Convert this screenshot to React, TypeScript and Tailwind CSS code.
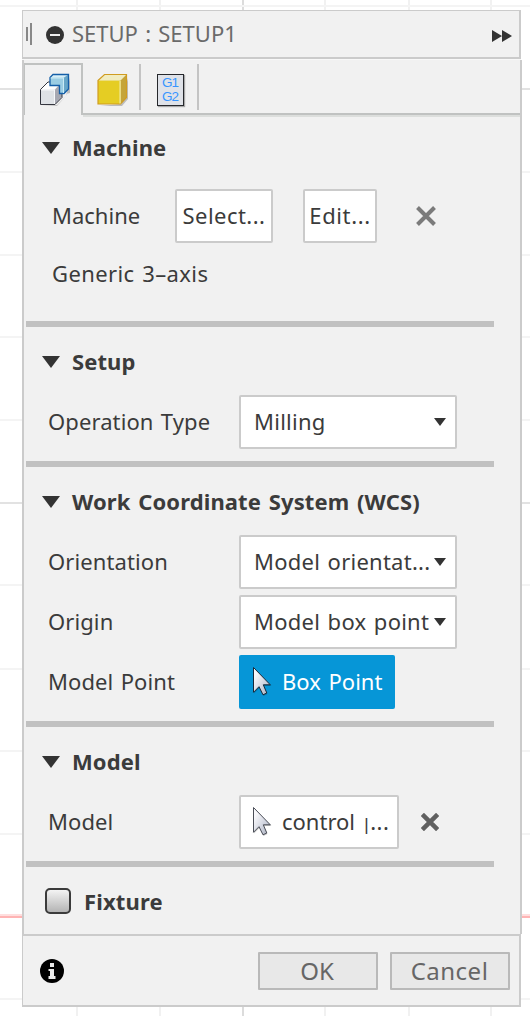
import type { ReactNode } from "react";

const GRID_X = [77, 160, 243, 325, 409, 491];
const GRID_Y = [6, 89, 172, 255, 337, 420, 503, 585, 669, 751, 834, 999];

function CanvasGrid() {
  return (
    <svg className="absolute inset-0" width="530" height="1016" viewBox="0 0 530 1016">
      {GRID_X.map((x) => (
        <rect key={x} x={x - 1} y="0" width="2" height="1016" fill={x === 243 ? "#dcdcdc" : "#f1f1f1"} />
      ))}
      {GRID_Y.map((y) => (
        <rect key={y} x="0" y={y - 1} width="530" height="2" fill={y === 89 || y === 503 ? "#e2e2e2" : "#f4f4f4"} />
      ))}
      <rect x="0" y="914" width="530" height="4" fill="#ffdede" />
      <rect x="0" y="916" width="530" height="2" fill="#ffb4b4" />
    </svg>
  );
}

function Triangle() {
  return (
    <svg className="mt-px" width="18" height="12" viewBox="0 0 18 12">
      <path d="M0 0H18L9 12Z" fill="#333" />
    </svg>
  );
}

function Cross({ color, width, size }: { color: string; width: number; size: number }) {
  return (
    <svg width={size} height={size} viewBox="0 0 20 20">
      <path d="M1.5 1.5L18.5 18.5M18.5 1.5L1.5 18.5" stroke={color} strokeWidth={width} />
    </svg>
  );
}

function Pointer({ dark }: { dark?: boolean }) {
  return (
    <svg width="20" height="32" viewBox="0 0 20 32">
      <defs>
        <linearGradient id="pointerFill" x1="0" y1="0" x2="1" y2="1">
          <stop offset="0.2" stopColor="#f8f8fb" />
          <stop offset="0.65" stopColor="#ccd0dc" />
          <stop offset="1" stopColor="#a4a9b8" />
        </linearGradient>
      </defs>
      <path d="M2 2V27.5L7.5 22L11.5 30L15.5 28L12 20H19.5Z" fill="#000" opacity="0.22" />
      <path
        d="M1.5 1.5V26.3L7 20.7L11 28.8L14.8 27L11.3 18.8H18.3Z"
        fill="url(#pointerFill)"
        stroke={dark ? "#17293a" : "#4b4e58"}
        strokeWidth="1"
      />
    </svg>
  );
}

function SetupIcon() {
  return (
    <svg width="32" height="34" viewBox="0 0 32 34">
      <path d="M3 33H18L27 23V21L31 20V4L27 23L18 32Z" fill="#000" opacity="0.2" />
      <path d="M1.5 16.5L9 9H23L16 16.5Z" fill="#fff" />
      <path d="M16 16.5L23 9V24L16 31.5Z" fill="#a6a8b2" />
      <path d="M1.5 16.5H16V31.5H1.5Z" fill="#dfe2e6" />
      <path d="M1.5 16.5L9 9H23V24.5L16 31.5H1.5Z" fill="none" stroke="#34363f" />
      <path d="M2 17H15.5V31" fill="none" stroke="#f7f8fa" />
      <path d="M11 4.5L14 1.5H29.5L25 4.5Z" fill="#d7eff8" />
      <path d="M25 4.5L29.5 1.5V16L25 20.5Z" fill="#67a6c8" />
      <path d="M11 4.5H25V20.5H20.5V12.5H11Z" fill="#9bcde3" />
      <path d="M29.5 1.5H14L11 4.5V12.5H20.5V20.5H25L29.5 16Z" fill="none" stroke="#155fa8" strokeWidth="1.3" />
      <path d="M11.7 5H24.5V20" fill="none" stroke="#caebf5" />
    </svg>
  );
}

function StockIcon() {
  return (
    <svg width="32" height="34" viewBox="0 0 32 34">
      <path d="M3 33H25L31 26V5L24 31Z" fill="#000" opacity="0.22" />
      <path d="M1 7.5L7.5 1.5H29.5L23.5 7.5Z" fill="#f1ecc0" />
      <path d="M23.5 7.5L29.5 1.5V24.5L23.5 31Z" fill="#c5a439" />
      <path d="M1 7.5H23.5V31H1Z" fill="#e5cd23" />
      <path d="M1 7.5L7.5 1.5H29.5V24.5L23.5 31H1Z" fill="none" stroke="#d09c20" strokeWidth="1.2" />
      <path d="M23 8V30.5" fill="none" stroke="#f1ecae" />
    </svg>
  );
}

function PostIcon() {
  return (
    <div className="flex h-[32px] w-[27px] flex-col items-center justify-center border border-[#26282c] bg-[#dfe2e8] pr-px font-['Liberation_Sans',sans-serif] text-[13.5px] leading-[14px] tracking-[-1px] text-[#3795ff] shadow-[1px_1px_1px_rgba(0,0,0,0.3)]">
      <span>G1</span>
      <span>G2</span>
    </div>
  );
}

function SectionTitle({ children }: { children: ReactNode }) {
  return (
    <div className="flex h-[68px] items-center pl-4">
      <Triangle />
      <h2 className="ml-3 font-bold tracking-[0.1px] [word-spacing:2px]">{children}</h2>
    </div>
  );
}

function Section({ title, children }: { title: string; children: ReactNode }) {
  return (
    <section className="border-b-[6px] border-[#c1c1c1] pb-3">
      <SectionTitle>{title}</SectionTitle>
      <div className="flex flex-col gap-1.5">{children}</div>
    </section>
  );
}

function Field({ label, children }: { label: string; children: ReactNode }) {
  return (
    <div className="flex h-[54px] items-center pl-[22px]">
      <span className="w-[191px] shrink-0 pb-0.5 tracking-[0.1px]">{label}</span>
      {children}
    </div>
  );
}

const boxClass = "flex h-[54px] shrink-0 items-center rounded-[2px] border-2 border-[#cbcbcb] bg-white";

function Select({ value }: { value: string }) {
  return (
    <button className={`${boxClass} w-[218px] justify-between pr-[9px] pl-[13px] whitespace-nowrap`}>
      <span className="pb-0.5 tracking-[0.25px] [word-spacing:1.5px]">{value}</span>
      <svg width="12" height="8" viewBox="0 0 12 8">
        <path d="M0 0H12L6 8Z" fill="#333" />
      </svg>
    </button>
  );
}

export default function App() {
  return (
    <div className="relative h-[1016px] w-[530px] overflow-hidden bg-white pt-[10px] pl-[22px] font-['Noto_Sans',sans-serif] text-[22px] leading-[30px] text-[#3b3b3b] [word-spacing:1.5px]">
      <CanvasGrid />
      <div className="relative w-[500px]">
        <header className="flex h-[49px] w-[499px] items-center border-t border-r-2 border-b-2 border-l border-[#cbcbcb] bg-[#f1f1f1] pl-[3px]">
          <svg width="6" height="22" viewBox="0 0 6 22">
            <path d="M0 4H2V18H0ZM4 0H6V22H4Z" fill="#888" />
          </svg>
          <svg className="mt-px ml-[14px]" width="18" height="18" viewBox="0 0 18 18">
            <circle cx="9" cy="9" r="9" fill="#333" />
            <path d="M4 8H14V10H4Z" fill="#eee" />
          </svg>
          <h1 className="ml-2 pb-0.5 text-[#6a6a6a]">SETUP : SETUP1</h1>
          <svg className="mt-[3px] mr-[7px] ml-auto" width="20" height="12" viewBox="0 0 20 12">
            <path d="M0 0L10 6L0 12ZM10 0L20 6L10 12Z" fill="#333" />
          </svg>
        </header>

        <div className="h-px w-[499px] bg-[#f8f8f8]" />
        <main className="h-[874px] border-x-2 border-[#cbcbcb] bg-[#f1f1f1]">
          <nav className="flex h-[57px] pt-[3px]">
            <div className="-mb-px w-[59px] pb-[3px]">
              <div className="h-full border-t-2 border-r-2 border-l border-[#c0c2c1] pt-[8px] pl-[14px]">
                <SetupIcon />
              </div>
            </div>
            <div className="flex flex-1 border-b-2 border-[#dcdedc]">
              <div className="flex flex-1 border-b-2 border-[#c0c2c1] pt-px">
                <div className="h-[46px] w-[58px] border-r-2 border-[#c4c4c4] pt-[9px] pl-[14px]">
                  <StockIcon />
                </div>
                <div className="h-[46px] w-[58px] border-r-2 border-[#c4c4c4] pt-[10px] pl-4">
                  <PostIcon />
                </div>
              </div>
            </div>
          </nav>

          <div className="ml-[2px] w-[468px]">
            <section className="h-[210px] border-b-[6px] border-[#c1c1c1]">
              <div className="flex h-[72px] items-start">
                <div className="-mt-[4px]">
                  <SectionTitle>Machine</SectionTitle>
                </div>
              </div>
              <div className="flex h-[54px] items-center pl-[26px]">
                <span className="w-[123px] pb-0.5">Machine</span>
                <button className={`${boxClass} w-[98px] justify-center pb-0.5 tracking-[0.45px]`}>Select...</button>
                <button className={`${boxClass} ml-[30px] w-[74px] justify-center pb-0.5 tracking-[0.6px]`}>Edit...</button>
                <span className="ml-[39px]">
                  <Cross color="#7b7b7b" width={4} size={20} />
                </span>
              </div>
              <p className="mt-[15px] pl-[26px] tracking-[0.4px]">Generic 3–axis</p>
            </section>

            <Section title="Setup">
              <Field label="Operation Type">
                <Select value="Milling" />
              </Field>
            </Section>

            <Section title="Work Coordinate System (WCS)">
              <Field label="Orientation">
                <Select value="Model orientat..." />
              </Field>
              <Field label="Origin">
                <Select value="Model box point" />
              </Field>
              <Field label="Model Point">
                <button className="flex h-[54px] w-[156px] items-center rounded-[2px] bg-[#0696d7] pl-[13px] text-white">
                  <Pointer dark />
                  <span className="ml-[10px] pb-0.5 [word-spacing:2px]">Box Point</span>
                </button>
              </Field>
            </Section>

            <Section title="Model">
              <Field label="Model">
                <button className={`${boxClass} w-[160px] pl-[11px] whitespace-nowrap`}>
                  <Pointer />
                  <span className="ml-[10px] [word-spacing:1px]">
                    control <span className="-mr-px text-[17px] font-medium">|</span>
                    <span className="tracking-[0.5px]">...</span>
                  </span>
                </button>
                <span className="ml-[22px]">
                  <Cross color="#606060" width={5} size={18} />
                </span>
              </Field>
            </Section>

            <div className="flex h-[68px] items-center pl-[19px]">
              <span className="h-[26px] w-[26px] rounded-[5px] border-2 border-[#3b3b3b] bg-linear-to-b from-[#f4f4f4] to-[#b4b4b4]" />
              <h2 className="ml-[13px] pb-px font-bold tracking-[0.15px]">Fixture</h2>
            </div>
          </div>
        </main>

        <footer className="flex h-[73px] w-[499px] items-center border-y-2 border-r-2 border-l border-[#cbcbcb] bg-[#f1f1f1] pr-[9px] pl-[17px] text-2xl text-[#666]">
          <svg className="mt-px" width="24" height="24" viewBox="0 0 24 24">
            <circle cx="12" cy="12" r="12" fill="#000" />
            <path d="M10 4H14V8H10ZM8.5 10H14V17H15.5V20H8.5V17H10V12H8.5Z" fill="#e9e9e9" />
          </svg>
          <button className="ml-auto flex h-[38px] w-[120px] items-center justify-center rounded-[1px] border-2 border-[#b9b9b9] bg-[#e8e8e8] pr-0.5">
            OK
          </button>
          <button className="ml-3 flex h-[38px] w-[120px] items-center justify-center rounded-[1px] border-2 border-[#b9b9b9] bg-[#e8e8e8] pr-px tracking-[0.5px]">
            Cancel
          </button>
        </footer>
      </div>
    </div>
  );
}
